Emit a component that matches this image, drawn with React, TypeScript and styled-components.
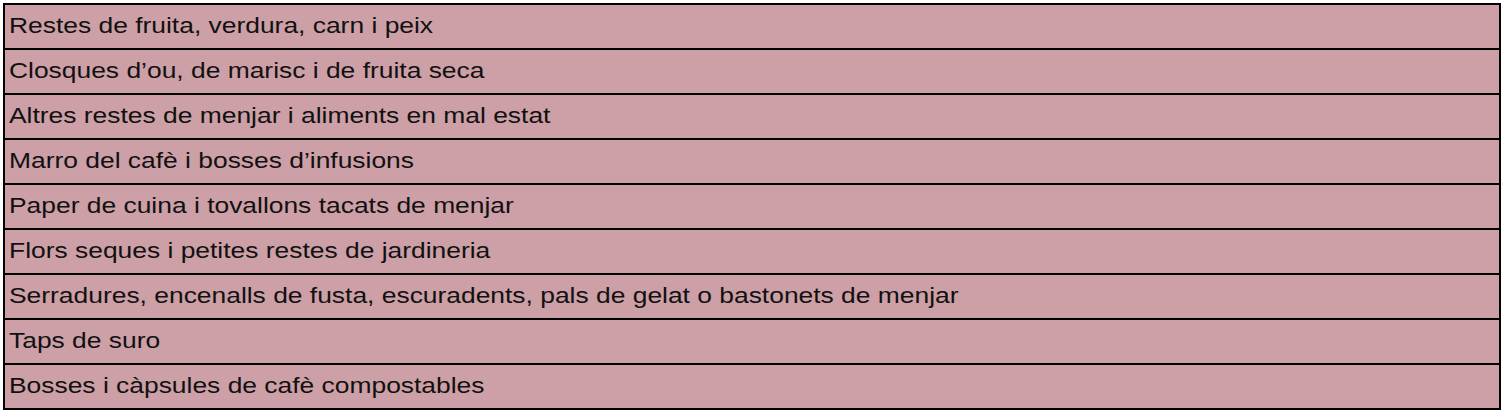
import React from "react";
import styled, { createGlobalStyle } from "styled-components";

const Global = createGlobalStyle`
  html, body {
    margin: 0;
    padding: 0;
    background: #ffffff;
  }
`;

const items = [
  "Restes de fruita, verdura, carn i peix",
  "Closques d’ou, de marisc i de fruita seca",
  "Altres restes de menjar i aliments en mal estat",
  "Marro del cafè i bosses d’infusions",
  "Paper de cuina i tovallons tacats de menjar",
  "Flors seques i petites restes de jardineria",
  "Serradures, encenalls de fusta, escuradents, pals de gelat o bastonets de menjar",
  "Taps de suro",
  "Bosses i càpsules de cafè compostables",
];

function App() {
  return (
    <>
      <Global />
      <Sheet>
        {items.map((text, i) => (
          <Row key={i} last={i === items.length - 1}>
            <Label>{text}</Label>
          </Row>
        ))}
      </Sheet>
    </>
  );
}

export default App;

const Sheet = styled.div`
  margin: 3px 0 0 3px;
  width: 1498px;
  box-sizing: border-box;
  border-left: 2px solid #000;
  border-right: 2px solid #000;
  display: flex;
  flex-direction: column;
  background: #cd9fa6;
`;

const Row = styled.div<{ last?: boolean }>`
  box-sizing: border-box;
  border-top: 2px solid #000;
  border-bottom: ${(p) => (p.last ? "2px solid #000" : "none")};
  height: ${(p) => (p.last ? "47px" : "45px")};
  display: flex;
  align-items: center;
  padding: 0 0 1px 4px;
`;

/* the sheet text is rendered a bit wider than plain Arial */
const Label = styled.span`
  font-family: "Liberation Sans", Arial, sans-serif;
  font-size: 22px;
  color: #111;
  white-space: nowrap;
  display: inline-block;
  transform: scaleX(1.2);
  transform-origin: left center;
`;
